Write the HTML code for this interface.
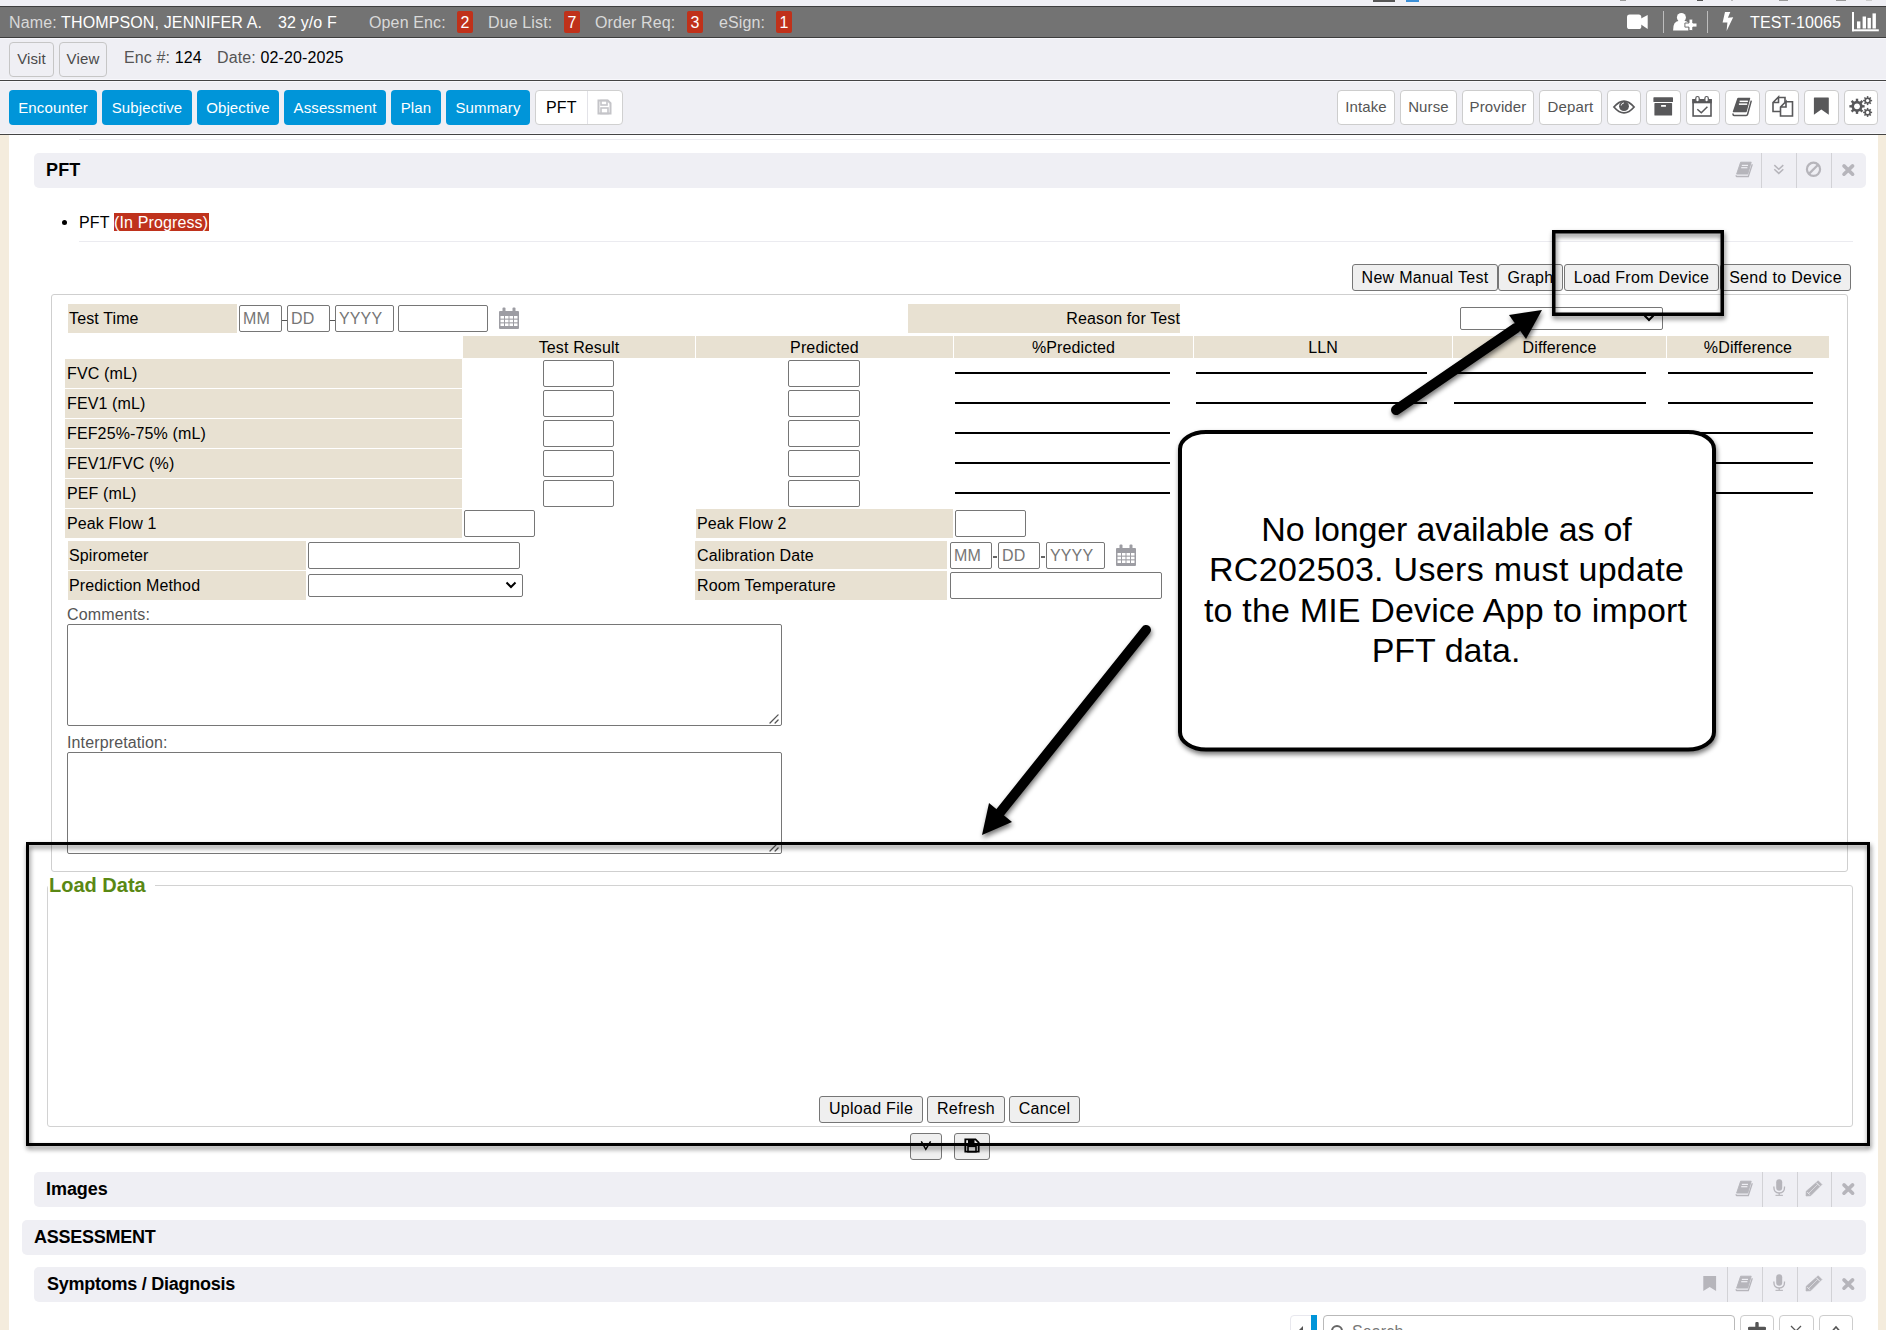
<!DOCTYPE html>
<html><head><meta charset="utf-8">
<style>
*{box-sizing:border-box}
html,body{margin:0;padding:0}
body{width:1886px;height:1330px;overflow:hidden;position:relative;background:#fff;font-family:"Liberation Sans",sans-serif;font-size:16px;color:#000;letter-spacing:0.13px}
.a{position:absolute}
.t{position:absolute;white-space:nowrap;line-height:18px}
.hdrbg{left:0;top:0;width:1886px;height:134px;background:#efeff4}
.topbar{left:0;top:6px;width:1886px;height:32px;background:#737373;border-top:1px solid #3d3d3d;border-bottom:1px solid #3d3d3d}
.hl{left:0;width:1886px;height:1px;background:#444}
.hlw{left:0;width:1886px;height:1px;background:#f8f8fc}
.lbl{color:#d9d9d9}
.wt{color:#fff}
.badge{position:absolute;top:11px;height:22px;width:16px;background:#c0311a;border-radius:2px;color:#fff;text-align:center;line-height:23px;font-size:16px}
.btnw{position:absolute;top:42px;height:35px;border:1px solid #c6c6c6;border-radius:4px;background:#efeff4;color:#4a4a4a;text-align:center;line-height:31px;font-size:15px}
.tab{position:absolute;top:90px;height:35px;background:#0095d9;border-radius:4px;color:#fff;font-size:15px;text-align:center;line-height:35px}
.rbtn{position:absolute;top:90px;height:35px;background:#fff;border:1px solid #cdcdcd;border-radius:4px;color:#555;font-size:15px;text-align:center;line-height:31px}
.ico{position:absolute;top:90px;height:35px;width:34px;background:#fff;border:1px solid #cdcdcd;border-radius:4px}
.ico svg{position:absolute;left:50%;top:50%;transform:translate(-50%,-50%)}
.beige{background:#f4ecdd}
.sechdr{position:absolute;background:#efeff4;border-radius:5px}
.bh{letter-spacing:-0.25px}
.sep{position:absolute;width:1px;background:#d2d2d6}
.cell{position:absolute;background:#e8e1d2;line-height:29px;padding-left:2px;white-space:nowrap}
.inp{position:absolute;background:#fff;border:1px solid #767676;border-radius:2px}
.ph{color:#767676;font-size:16px;line-height:26px;padding-left:3px}
.ul{position:absolute;height:2px;background:#000}
.gbtn{position:absolute;background:#efefef;border:1px solid #767676;border-radius:3px;text-align:center;line-height:25px;white-space:nowrap;letter-spacing:0.3px}
.gb2{line-height:23px}
</style></head>
<body>
<div class="a hdrbg"></div>
<!-- top artifacts -->
<div class="a" style="left:1373px;top:0;width:22px;height:2px;background:#555"></div>
<div class="a" style="left:1406px;top:0;width:13px;height:2px;background:#3a8fd8"></div>
<div class="a" style="left:1620px;top:0;width:6px;height:1px;background:#9a9a9a"></div><div class="a" style="left:1697px;top:0;width:6px;height:1px;background:#555"></div><div class="a" style="left:1731px;top:0;width:2px;height:1px;background:#bbb"></div><div class="a" style="left:1779px;top:0;width:9px;height:1px;background:#999"></div><div class="a" style="left:1836px;top:0;width:10px;height:1px;background:#999"></div><div class="a" style="left:1866px;top:0;width:6px;height:1px;background:#ccc"></div>

<div class="a topbar"></div>
<div class="a hlw" style="top:38px"></div>
<div class="t lbl" style="left:9px;top:14px">Name: <span class="wt">THOMPSON, JENNIFER A.</span></div>
<div class="t wt" style="left:278px;top:14px">32 y/o F</div>
<div class="t lbl" style="left:369px;top:14px">Open Enc:</div>
<div class="badge" style="left:457px">2</div>
<div class="t lbl" style="left:488px;top:14px">Due List:</div>
<div class="badge" style="left:564px">7</div>
<div class="t lbl" style="left:595px;top:14px">Order Req:</div>
<div class="badge" style="left:687px">3</div>
<div class="t lbl" style="left:719px;top:14px">eSign:</div>
<div class="badge" style="left:776px">1</div>

<div class="t wt" style="left:1750px;top:14px">TEST-10065</div>
<!-- top bar icons -->
<svg class="a" style="left:1626px;top:14px" width="24" height="16" viewBox="0 0 24 16">
  <rect x="1" y="0.4" width="14.3" height="14.6" rx="2.6" fill="#fff"/>
  <path d="M15 4.6 L21.7 1 V15 L15 10.6 Z" fill="#fff"/>
</svg>
<div class="a" style="left:1663px;top:11px;width:1px;height:22px;background:#bdbdbd"></div>
<svg class="a" style="left:1672px;top:13px" width="27" height="19" viewBox="0 0 27 19">
  <circle cx="9.4" cy="4.5" r="4.5" fill="#fff"/>
  <path d="M1.1 17.6 Q0.8 8 7.5 7.8 H11.5 Q14.5 7.8 16.5 9.8 V17.6 Z" fill="#fff"/>
  <path d="M17 6.1 H20.8 V10 H25 V14.1 H20.8 V17.6 H17 V14.1 H12.9 V10 H17 Z" fill="#fff" stroke="#737373" stroke-width="1"/>
</svg>
<div class="a" style="left:1707px;top:11px;width:1px;height:22px;background:#bdbdbd"></div>
<svg class="a" style="left:1721px;top:11px" width="14" height="21" viewBox="0 0 14 21">
  <path d="M4 0.9 L9.3 0.9 L6.9 6.8 L12.2 6.2 L5.6 19.9 L6.4 11.4 L1.6 11.5 Z" fill="#fff"/>
</svg>
<svg class="a" style="left:1852px;top:12px" width="28" height="21" viewBox="0 0 28 21">
  <rect x="0" y="0" width="2" height="19.3" fill="#fff"/>
  <rect x="0" y="17.3" width="26.8" height="2" fill="#fff"/>
  <rect x="5" y="9.4" width="3.4" height="7.1" fill="#fff"/>
  <rect x="10.6" y="4.5" width="3.4" height="12" fill="#fff"/>
  <rect x="15.5" y="5.9" width="3.4" height="10.6" fill="#fff"/>
  <rect x="20.5" y="1.4" width="3.4" height="15.1" fill="#fff"/>
</svg>


<!-- row 2 -->
<div class="btnw" style="left:9px;width:45px">Visit</div>
<div class="btnw" style="left:59px;width:48px">View</div>
<div class="t" style="left:124px;top:49px;color:#555">Enc #: <span style="color:#000">124</span></div>
<div class="t" style="left:217px;top:49px;color:#555">Date: <span style="color:#000">02-20-2025</span></div>

<div class="a hlw" style="top:79px"></div>
<div class="a hl" style="top:80px"></div>
<div class="a hlw" style="top:81px"></div>

<!-- tabs -->
<div class="tab" style="left:9px;width:88px">Encounter</div>
<div class="tab" style="left:102px;width:90px">Subjective</div>
<div class="tab" style="left:197px;width:82px">Objective</div>
<div class="tab" style="left:284px;width:102px">Assessment</div>
<div class="tab" style="left:391px;width:50px">Plan</div>
<div class="tab" style="left:446px;width:84px">Summary</div>
<div class="rbtn" style="left:535px;width:88px;border-color:#d0d0d0"></div>

<div class="rbtn" style="left:1337px;width:58px">Intake</div>
<div class="rbtn" style="left:1400px;width:57px">Nurse</div>
<div class="rbtn" style="left:1462px;width:72px">Provider</div>
<div class="rbtn" style="left:1539px;width:63px">Depart</div>


<!-- PFT tab -->
<div class="t" style="left:546px;top:99px;color:#000">PFT</div>
<div class="a" style="left:587px;top:91px;width:1px;height:33px;background:#e3e3e8"></div>
<svg class="a" style="left:597px;top:99px" width="15" height="16" viewBox="0 0 15 16">
  <path d="M1.5 1.5 H10.8 L13.5 4.2 V14.5 H1.5 Z" fill="none" stroke="#c4c4c8" stroke-width="2"/>
  <rect x="4" y="1.5" width="6" height="4.5" fill="none" stroke="#c4c4c8" stroke-width="1.6"/>
  <rect x="4" y="9" width="7" height="5.5" fill="none" stroke="#c4c4c8" stroke-width="1.6"/>
</svg>

<!-- right icon buttons -->
<div class="ico" style="left:1607px"><svg style="position:absolute;left:-1px;top:-1px;transform:none" width="34" height="35" viewBox="0 0 34 35"><path d="M6.9 17 Q17 5.2 27.1 17 Q17 28.8 6.9 17 Z" fill="none" stroke="#58585a" stroke-width="1.7"/><circle cx="17" cy="16.2" r="4.9" fill="#58585a"/><path d="M14.2 15.5 A3 3 0 0 1 17 12.9" fill="none" stroke="#fff" stroke-width="0.9"/></svg></div>
<div class="ico" style="left:1646px;width:35px"><svg style="position:absolute;left:-1px;top:-1px;transform:none" width="34" height="35" viewBox="0 0 34 35"><rect x="7.4" y="7.3" width="19.6" height="4.7" rx="0.6" fill="#58585a"/><rect x="8.4" y="13.1" width="17.7" height="12.5" rx="0.6" fill="#58585a"/><rect x="15" y="15" width="5" height="1.7" rx="0.5" fill="#fff"/></svg></div>
<div class="ico" style="left:1686px"><svg style="position:absolute;left:-1px;top:-1px;transform:none" width="34" height="35" viewBox="0 0 34 35"><rect x="7.1" y="9.9" width="17.9" height="16.1" fill="none" stroke="#58585a" stroke-width="1.6"/><rect x="6.3" y="9.1" width="19.5" height="4.2" fill="#58585a"/><rect x="9.8" y="6.5" width="3.4" height="5.4" rx="1.7" fill="#fff" stroke="#58585a" stroke-width="1.2"/><rect x="18.9" y="6.5" width="3.4" height="5.4" rx="1.7" fill="#fff" stroke="#58585a" stroke-width="1.2"/><path d="M11.3 19.2 L15.3 22.8 L21.4 16.7" fill="none" stroke="#58585a" stroke-width="1.5"/></svg></div>
<div class="ico" style="left:1725px;width:35px"><svg style="position:absolute;left:-1px;top:-1px;transform:none" width="34" height="35" viewBox="0 0 34 35"><path d="M13.3 7.7 H24.9 Q25.4 7.7 25.2 8.4 L21.8 21.6 Q21.6 22.2 21 22.2 H8.3 Q7.6 22.2 7.8 21.5 L12.2 8.4 Q12.5 7.7 13.3 7.7 Z" fill="#58585a"/><path d="M8.2 23.5 Q7.6 25.4 9.2 25.4 H21.2 Q22.3 25.4 22.6 24.3 L26.3 10.6" fill="none" stroke="#58585a" stroke-width="1.5"/><rect x="14.6" y="10.6" width="8.3" height="1.5" fill="#fff"/><rect x="13.9" y="13.4" width="8.3" height="1.5" fill="#fff"/></svg></div>
<div class="ico" style="left:1765px"><svg style="position:absolute;left:-1px;top:-1px;transform:none" width="34" height="35" viewBox="0 0 34 35"><g fill="none" stroke="#58585a" stroke-width="1.6" stroke-linejoin="miter"><path d="M13.5 7.5 H20 V12 M15.5 21.5 H8 V12.5 L13.5 7 V12.5 H8"/><path d="M20.5 11.8 H27.5 V26 H15.5 V17 L21 11.5 V17 H15.5"/></g></svg></div>
<div class="ico" style="left:1804px;width:35px"><svg style="position:absolute;left:-1px;top:-1px;transform:none" width="34" height="35" viewBox="0 0 34 35"><path d="M10.4 7.5 H24.3 Q24.8 7.5 24.8 8 V24.8 L17.3 19.4 L9.9 24.8 V8 Q9.9 7.5 10.4 7.5 Z" fill="#58585a"/></svg></div>
<div class="ico" style="left:1844px"><svg style="position:absolute;left:-1px;top:-1px;transform:none" width="34" height="35" viewBox="0 0 34 35"><circle cx="13" cy="16.3" r="5.6" fill="#58585a"/><rect x="11.8" y="8.700000000000001" width="2.4" height="7.6" fill="#58585a" transform="rotate(0.0 13 16.3)"/><rect x="11.8" y="8.700000000000001" width="2.4" height="7.6" fill="#58585a" transform="rotate(45.0 13 16.3)"/><rect x="11.8" y="8.700000000000001" width="2.4" height="7.6" fill="#58585a" transform="rotate(90.0 13 16.3)"/><rect x="11.8" y="8.700000000000001" width="2.4" height="7.6" fill="#58585a" transform="rotate(135.0 13 16.3)"/><rect x="11.8" y="8.700000000000001" width="2.4" height="7.6" fill="#58585a" transform="rotate(180.0 13 16.3)"/><rect x="11.8" y="8.700000000000001" width="2.4" height="7.6" fill="#58585a" transform="rotate(225.0 13 16.3)"/><rect x="11.8" y="8.700000000000001" width="2.4" height="7.6" fill="#58585a" transform="rotate(270.0 13 16.3)"/><rect x="11.8" y="8.700000000000001" width="2.4" height="7.6" fill="#58585a" transform="rotate(315.0 13 16.3)"/><circle cx="13" cy="16.3" r="2.9" fill="#fff"/><circle cx="23.6" cy="10.6" r="3.2" fill="#58585a"/><rect x="22.85" y="6.1" width="1.5" height="4.5" fill="#58585a" transform="rotate(0.0 23.6 10.6)"/><rect x="22.85" y="6.1" width="1.5" height="4.5" fill="#58585a" transform="rotate(45.0 23.6 10.6)"/><rect x="22.85" y="6.1" width="1.5" height="4.5" fill="#58585a" transform="rotate(90.0 23.6 10.6)"/><rect x="22.85" y="6.1" width="1.5" height="4.5" fill="#58585a" transform="rotate(135.0 23.6 10.6)"/><rect x="22.85" y="6.1" width="1.5" height="4.5" fill="#58585a" transform="rotate(180.0 23.6 10.6)"/><rect x="22.85" y="6.1" width="1.5" height="4.5" fill="#58585a" transform="rotate(225.0 23.6 10.6)"/><rect x="22.85" y="6.1" width="1.5" height="4.5" fill="#58585a" transform="rotate(270.0 23.6 10.6)"/><rect x="22.85" y="6.1" width="1.5" height="4.5" fill="#58585a" transform="rotate(315.0 23.6 10.6)"/><circle cx="23.6" cy="10.6" r="1.6" fill="#fff"/><circle cx="23.6" cy="22.4" r="3.2" fill="#58585a"/><rect x="22.85" y="17.9" width="1.5" height="4.5" fill="#58585a" transform="rotate(0.0 23.6 22.4)"/><rect x="22.85" y="17.9" width="1.5" height="4.5" fill="#58585a" transform="rotate(45.0 23.6 22.4)"/><rect x="22.85" y="17.9" width="1.5" height="4.5" fill="#58585a" transform="rotate(90.0 23.6 22.4)"/><rect x="22.85" y="17.9" width="1.5" height="4.5" fill="#58585a" transform="rotate(135.0 23.6 22.4)"/><rect x="22.85" y="17.9" width="1.5" height="4.5" fill="#58585a" transform="rotate(180.0 23.6 22.4)"/><rect x="22.85" y="17.9" width="1.5" height="4.5" fill="#58585a" transform="rotate(225.0 23.6 22.4)"/><rect x="22.85" y="17.9" width="1.5" height="4.5" fill="#58585a" transform="rotate(270.0 23.6 22.4)"/><rect x="22.85" y="17.9" width="1.5" height="4.5" fill="#58585a" transform="rotate(315.0 23.6 22.4)"/><circle cx="23.6" cy="22.4" r="1.6" fill="#fff"/></svg></div>
<div class="a hlw" style="top:133px"></div>
<div class="a hl" style="top:134px"></div>

<!-- beige side strips -->
<div class="a beige" style="left:0;top:135px;width:9px;height:1195px"></div>
<div class="a beige" style="left:1878px;top:135px;width:8px;height:1195px"></div>


<!-- faint lines -->
<div class="a" style="left:79px;top:139px;width:1774px;height:1px;background:#ebebf0"></div>

<!-- PFT section header -->
<div class="sechdr" style="left:34px;top:153px;width:1832px;height:35px"></div>
<div class="t" style="left:46px;top:160px;font-weight:bold;font-size:18px;line-height:20px">PFT</div>
<div class="sep" style="left:1761px;top:153px;height:35px"></div>
<div class="sep" style="left:1796px;top:153px;height:35px"></div>
<div class="sep" style="left:1831px;top:153px;height:35px"></div>
<svg class="a" style="left:1734px;top:161px" width="20" height="18" viewBox="0 0 20 18"><path d="M6.6 1.2 H17.2 L13.8 13.1 H2.6 Z" fill="#b6b5bb" stroke="#b6b5bb" stroke-width="0.9" stroke-linejoin="round"/><path d="M2.1 14.2 Q2 15.5 3.4 15.5 H14.3 L18.3 3.2" fill="none" stroke="#b6b5bb" stroke-width="1.3"/><rect x="7.8" y="3.8" width="6.2" height="1.2" fill="#efeff4"/><rect x="7.2" y="6.1" width="6.2" height="1.2" fill="#efeff4"/></svg>
<svg class="a" style="left:1773px;top:164px" width="12" height="11" viewBox="0 0 12 11"><path d="M1.3 1.1 L5.8 5.3 L10.3 1.1 M1.3 5.2 L5.8 9.4 L10.3 5.2" fill="none" stroke="#b6b5bb" stroke-width="1.5"/></svg>
<svg class="a" style="left:1805px;top:161px" width="17" height="17" viewBox="0 0 17 17"><circle cx="8.5" cy="8.3" r="6.6" fill="none" stroke="#b6b5bb" stroke-width="2.2"/><path d="M3.9 12.9 L13.1 3.7" stroke="#b6b5bb" stroke-width="2.2"/></svg>
<svg class="a" style="left:1841px;top:163px" width="15" height="15" viewBox="0 0 15 15"><path d="M3 2.9 L11.6 11.2 M11.6 2.9 L3 11.2" stroke="#b6b5bb" stroke-width="3.6" stroke-linecap="round"/></svg>

<!-- bullet item -->
<div class="a" style="left:62px;top:220px;width:5px;height:5px;border-radius:50%;background:#000"></div>
<div class="t" style="left:79px;top:214px">PFT</div>
<div class="a" style="left:114px;top:213px;width:95px;height:18px;background:#bf321c"></div>
<div class="t" style="left:114px;top:214px;color:#fff">(In Progress)</div>
<div class="a" style="left:79px;top:241px;width:1774px;height:1px;background:#ebebf0"></div>

<!-- action buttons -->
<div class="gbtn" style="left:1352px;top:264px;width:146px;height:27px">New Manual Test</div>
<div class="gbtn" style="left:1498px;top:264px;width:65px;height:27px">Graph</div>
<div class="gbtn" style="left:1564px;top:264px;width:155px;height:27px">Load From Device</div>
<div class="gbtn" style="left:1720px;top:264px;width:131px;height:27px">Send to Device</div>

<!-- form box -->
<div class="a" style="left:51px;top:294px;width:1797px;height:578px;border:1px solid #cfcfcf;border-radius:3px"></div>

<div class="cell" style="left:68px;top:304px;width:169px;height:29px;padding-left:1px">Test Time</div>
<div class="inp ph" style="left:239px;top:305px;width:43px;height:27px">MM</div>
<div class="a" style="left:282px;top:320px;width:5px;height:1px;background:#555"></div>
<div class="inp ph" style="left:287px;top:305px;width:43px;height:27px">DD</div>
<div class="a" style="left:330px;top:320px;width:5px;height:1px;background:#555"></div>
<div class="inp ph" style="left:335px;top:305px;width:59px;height:27px">YYYY</div>
<div class="inp" style="left:398px;top:305px;width:90px;height:27px"></div>
<svg class="a" style="left:498px;top:307px" width="22" height="23" viewBox="0 0 22 23"><g fill="#9d9da3"><rect x="1" y="4" width="20" height="18" rx="1"/><rect x="4.5" y="0.5" width="3" height="6" rx="1"/><rect x="14.5" y="0.5" width="3" height="6" rx="1"/></g><g fill="#fff"><rect x="2.5" y="9" width="3.5" height="2.6"/><rect x="7" y="9" width="3.5" height="2.6"/><rect x="11.5" y="9" width="3.5" height="2.6"/><rect x="16" y="9" width="3.5" height="2.6"/><rect x="2.5" y="12.7" width="3.5" height="2.6"/><rect x="7" y="12.7" width="3.5" height="2.6"/><rect x="11.5" y="12.7" width="3.5" height="2.6"/><rect x="16" y="12.7" width="3.5" height="2.6"/><rect x="2.5" y="16.4" width="3.5" height="2.6"/><rect x="7" y="16.4" width="3.5" height="2.6"/><rect x="11.5" y="16.4" width="3.5" height="2.6"/><rect x="16" y="16.4" width="3.5" height="2.6"/></g></svg>
<div class="cell" style="left:908px;top:304px;width:272px;height:29px;text-align:right;padding-right:0">Reason for Test</div>
<div class="inp" style="left:1460px;top:307px;width:203px;height:23px"></div>
<svg class="a" style="left:1643px;top:314px" width="12" height="8" viewBox="0 0 12 8"><path d="M1.5 1.5 L6 6 L10.5 1.5" fill="none" stroke="#000" stroke-width="2"/></svg>

<!-- header row -->
<div class="cell" style="left:463px;top:336px;width:232px;height:22px;line-height:24px;text-align:center;padding:0">Test Result</div>
<div class="cell" style="left:696px;top:336px;width:257px;height:22px;line-height:24px;text-align:center;padding:0">Predicted</div>
<div class="cell" style="left:954px;top:336px;width:239px;height:22px;line-height:24px;text-align:center;padding:0">%Predicted</div>
<div class="cell" style="left:1194px;top:336px;width:258px;height:22px;line-height:24px;text-align:center;padding:0">LLN</div>
<div class="cell" style="left:1453px;top:336px;width:213px;height:22px;line-height:24px;text-align:center;padding:0">Difference</div>
<div class="cell" style="left:1667px;top:336px;width:162px;height:22px;line-height:24px;text-align:center;padding:0">%Difference</div>
<div class="cell" style="left:65px;top:359px;width:397px;height:29px">FVC (mL)</div>
<div class="inp" style="left:543px;top:360px;width:71px;height:27px"></div>
<div class="inp" style="left:788px;top:360px;width:72px;height:27px"></div>
<div class="ul" style="left:955px;top:372px;width:215px"></div>
<div class="ul" style="left:1196px;top:372px;width:231px"></div>
<div class="ul" style="left:1454px;top:372px;width:192px"></div>
<div class="ul" style="left:1668px;top:372px;width:145px"></div>
<div class="cell" style="left:65px;top:389px;width:397px;height:29px">FEV1 (mL)</div>
<div class="inp" style="left:543px;top:390px;width:71px;height:27px"></div>
<div class="inp" style="left:788px;top:390px;width:72px;height:27px"></div>
<div class="ul" style="left:955px;top:402px;width:215px"></div>
<div class="ul" style="left:1196px;top:402px;width:231px"></div>
<div class="ul" style="left:1454px;top:402px;width:192px"></div>
<div class="ul" style="left:1668px;top:402px;width:145px"></div>
<div class="cell" style="left:65px;top:419px;width:397px;height:29px">FEF25%-75% (mL)</div>
<div class="inp" style="left:543px;top:420px;width:71px;height:27px"></div>
<div class="inp" style="left:788px;top:420px;width:72px;height:27px"></div>
<div class="ul" style="left:955px;top:432px;width:215px"></div>
<div class="ul" style="left:1196px;top:432px;width:231px"></div>
<div class="ul" style="left:1454px;top:432px;width:192px"></div>
<div class="ul" style="left:1668px;top:432px;width:145px"></div>
<div class="cell" style="left:65px;top:449px;width:397px;height:29px">FEV1/FVC (%)</div>
<div class="inp" style="left:543px;top:450px;width:71px;height:27px"></div>
<div class="inp" style="left:788px;top:450px;width:72px;height:27px"></div>
<div class="ul" style="left:955px;top:462px;width:215px"></div>
<div class="ul" style="left:1196px;top:462px;width:231px"></div>
<div class="ul" style="left:1454px;top:462px;width:192px"></div>
<div class="ul" style="left:1668px;top:462px;width:145px"></div>
<div class="cell" style="left:65px;top:479px;width:397px;height:29px">PEF (mL)</div>
<div class="inp" style="left:543px;top:480px;width:71px;height:27px"></div>
<div class="inp" style="left:788px;top:480px;width:72px;height:27px"></div>
<div class="ul" style="left:955px;top:492px;width:215px"></div>
<div class="ul" style="left:1196px;top:492px;width:231px"></div>
<div class="ul" style="left:1454px;top:492px;width:192px"></div>
<div class="ul" style="left:1668px;top:492px;width:145px"></div>

<div class="cell" style="left:65px;top:509px;width:397px;height:29px">Peak Flow 1</div>
<div class="inp" style="left:464px;top:510px;width:71px;height:27px"></div>
<div class="cell" style="left:696px;top:509px;width:257px;height:29px;padding-left:1px">Peak Flow 2</div>
<div class="inp" style="left:955px;top:510px;width:71px;height:27px"></div>

<div class="cell" style="left:68px;top:541px;width:238px;height:29px;padding-left:1px">Spirometer</div>
<div class="inp" style="left:308px;top:542px;width:212px;height:27px"></div>
<div class="cell" style="left:68px;top:571px;width:238px;height:29px;padding-left:1px">Prediction Method</div>
<div class="inp" style="left:308px;top:574px;width:215px;height:23px"></div>
<svg class="a" style="left:505px;top:581px" width="12" height="8" viewBox="0 0 12 8"><path d="M1.5 1.5 L6 6 L10.5 1.5" fill="none" stroke="#000" stroke-width="2"/></svg>

<div class="cell" style="left:695px;top:541px;width:252px;height:28px;padding-left:2px">Calibration Date</div>
<div class="inp ph" style="left:950px;top:542px;width:42px;height:27px">MM</div>
<div class="a" style="left:993px;top:556px;width:4px;height:2px;background:#666"></div>
<div class="inp ph" style="left:998px;top:542px;width:42px;height:27px">DD</div>
<div class="a" style="left:1041px;top:556px;width:4px;height:2px;background:#666"></div>
<div class="inp ph" style="left:1046px;top:542px;width:59px;height:27px">YYYY</div>
<svg class="a" style="left:1115px;top:544px" width="22" height="23" viewBox="0 0 22 23"><g fill="#9d9da3"><rect x="1" y="4" width="20" height="18" rx="1"/><rect x="4.5" y="0.5" width="3" height="6" rx="1"/><rect x="14.5" y="0.5" width="3" height="6" rx="1"/></g><g fill="#fff"><rect x="2.5" y="9" width="3.5" height="2.6"/><rect x="7" y="9" width="3.5" height="2.6"/><rect x="11.5" y="9" width="3.5" height="2.6"/><rect x="16" y="9" width="3.5" height="2.6"/><rect x="2.5" y="12.7" width="3.5" height="2.6"/><rect x="7" y="12.7" width="3.5" height="2.6"/><rect x="11.5" y="12.7" width="3.5" height="2.6"/><rect x="16" y="12.7" width="3.5" height="2.6"/><rect x="2.5" y="16.4" width="3.5" height="2.6"/><rect x="7" y="16.4" width="3.5" height="2.6"/><rect x="11.5" y="16.4" width="3.5" height="2.6"/><rect x="16" y="16.4" width="3.5" height="2.6"/></g></svg>
<div class="cell" style="left:695px;top:571px;width:252px;height:29px;padding-left:2px">Room Temperature</div>
<div class="inp" style="left:950px;top:572px;width:212px;height:27px"></div>

<div class="t" style="left:67px;top:606px;color:#555">Comments:</div>
<div class="inp" style="left:67px;top:624px;width:715px;height:102px"></div>
<svg class="a" style="left:768px;top:713px" width="12" height="12" viewBox="0 0 12 12"><path d="M10.1 1.9 L2 10 M10.1 7 L7.1 10" stroke="#555" stroke-width="1.3" stroke-linecap="round"/></svg>
<div class="t" style="left:67px;top:734px;color:#555">Interpretation:</div>
<div class="inp" style="left:67px;top:752px;width:715px;height:102px"></div>
<svg class="a" style="left:768px;top:841px" width="12" height="12" viewBox="0 0 12 12"><path d="M10.1 1.9 L2 10 M10.1 7 L7.1 10" stroke="#555" stroke-width="1.3" stroke-linecap="round"/></svg>


<!-- Load Data fieldset -->
<div class="a" style="left:47px;top:885px;width:1806px;height:242px;border:1px solid #d2d2d2;border-radius:3px"></div>
<div class="a" style="left:48px;top:882px;width:107px;height:8px;background:#fff"></div>
<div class="t" style="left:49px;top:874px;font-weight:bold;font-size:20px;line-height:22px;color:#5a8814;letter-spacing:0">Load Data</div>
<div class="gbtn" style="left:819px;top:1096px;width:104px;height:27px;line-height:23px">Upload File</div>
<div class="gbtn" style="left:927px;top:1096px;width:78px;height:27px;line-height:23px">Refresh</div>
<div class="gbtn" style="left:1009px;top:1096px;width:71px;height:27px;line-height:23px">Cancel</div>

<div class="gbtn" style="left:910px;top:1133px;width:32px;height:27px"></div>
<svg class="a" style="left:920px;top:1140px" width="12" height="11" viewBox="0 0 12 11"><path d="M1.3 1.3 L5.8 9.4 L10.6 1.3" fill="none" stroke="#000" stroke-width="1.4"/></svg>
<div class="gbtn" style="left:954px;top:1133px;width:36px;height:27px"></div>
<svg class="a" style="left:964px;top:1138px" width="16" height="15" viewBox="0 0 16 15"><path d="M1.3 1.3 H11.5 L14.7 4.5 V13.7 H1.3 Z" fill="none" stroke="#000" stroke-width="1.8"/><rect x="4" y="1.3" width="6.5" height="4" fill="#000"/><rect x="4" y="8.3" width="8" height="5.4" fill="none" stroke="#000" stroke-width="1.6"/></svg>

<!-- Images -->
<div class="sechdr" style="left:34px;top:1172px;width:1832px;height:35px"></div>
<div class="t" style="left:46px;top:1179px;font-weight:bold;font-size:18px;line-height:20px;letter-spacing:-0.05px">Images</div>
<div class="sep" style="left:1762px;top:1172px;height:35px"></div>
<div class="sep" style="left:1797px;top:1172px;height:35px"></div>
<div class="sep" style="left:1831px;top:1172px;height:35px"></div>
<svg class="a" style="left:1734px;top:1180px" width="20" height="18" viewBox="0 0 20 18"><path d="M6.6 1.2 H17.2 L13.8 13.1 H2.6 Z" fill="#b6b5bb" stroke="#b6b5bb" stroke-width="0.9" stroke-linejoin="round"/><path d="M2.1 14.2 Q2 15.5 3.4 15.5 H14.3 L18.3 3.2" fill="none" stroke="#b6b5bb" stroke-width="1.3"/><rect x="7.8" y="3.8" width="6.2" height="1.2" fill="#efeff4"/><rect x="7.2" y="6.1" width="6.2" height="1.2" fill="#efeff4"/></svg>
<svg class="a" style="left:1773px;top:1179px" width="13" height="18" viewBox="0 0 13 18"><rect x="3.2" y="0.3" width="6" height="11.5" rx="3" fill="#b6b5bb"/><path d="M0.9 7.5 V8.6 Q0.9 14 6.2 14 Q11.5 14 11.5 8.6 V7.5" fill="none" stroke="#b6b5bb" stroke-width="1.3"/><rect x="5.6" y="14" width="1.2" height="2" fill="#b6b5bb"/><rect x="2.5" y="15.8" width="7.4" height="1.1" fill="#b6b5bb"/></svg>
<svg class="a" style="left:1805px;top:1180px" width="18" height="17" viewBox="0 0 18 17"><path d="M13.2 0.8 L16.9 4.5 L5.6 15.8 L1 16 L1.2 11.3 Z" fill="#b6b5bb" stroke="#b6b5bb" stroke-width="0.6" stroke-linejoin="round"/><path d="M11.3 2.7 L15 6.4" stroke="#efeff4" stroke-width="1"/><path d="M2.4 12.2 L4.8 14.6" stroke="#efeff4" stroke-width="1"/><path d="M3.8 13.2 L12.6 4.4" stroke="#efeff4" stroke-width="0.6"/></svg>
<svg class="a" style="left:1841px;top:1182px" width="15" height="15" viewBox="0 0 15 15"><path d="M3 2.9 L11.6 11.2 M11.6 2.9 L3 11.2" stroke="#b6b5bb" stroke-width="3.6" stroke-linecap="round"/></svg>

<div class="sechdr" style="left:22px;top:1220px;width:1844px;height:35px"></div>
<div class="t" style="left:34px;top:1227px;font-weight:bold;font-size:18px;line-height:20px;letter-spacing:-0.25px">ASSESSMENT</div>
<div class="sechdr" style="left:34px;top:1267px;width:1832px;height:35px"></div>
<div class="t" style="left:47px;top:1274px;font-weight:bold;font-size:18px;line-height:20px;letter-spacing:-0.25px">Symptoms / Diagnosis</div>
<div class="sep" style="left:1762px;top:1267px;height:35px"></div>
<div class="sep" style="left:1797px;top:1267px;height:35px"></div>
<div class="sep" style="left:1831px;top:1267px;height:35px"></div>
<div class="sep" style="left:1727px;top:1267px;height:35px"></div>
<svg class="a" style="left:1734px;top:1275px" width="20" height="18" viewBox="0 0 20 18"><path d="M6.6 1.2 H17.2 L13.8 13.1 H2.6 Z" fill="#b6b5bb" stroke="#b6b5bb" stroke-width="0.9" stroke-linejoin="round"/><path d="M2.1 14.2 Q2 15.5 3.4 15.5 H14.3 L18.3 3.2" fill="none" stroke="#b6b5bb" stroke-width="1.3"/><rect x="7.8" y="3.8" width="6.2" height="1.2" fill="#efeff4"/><rect x="7.2" y="6.1" width="6.2" height="1.2" fill="#efeff4"/></svg>
<svg class="a" style="left:1773px;top:1274px" width="13" height="18" viewBox="0 0 13 18"><rect x="3.2" y="0.3" width="6" height="11.5" rx="3" fill="#b6b5bb"/><path d="M0.9 7.5 V8.6 Q0.9 14 6.2 14 Q11.5 14 11.5 8.6 V7.5" fill="none" stroke="#b6b5bb" stroke-width="1.3"/><rect x="5.6" y="14" width="1.2" height="2" fill="#b6b5bb"/><rect x="2.5" y="15.8" width="7.4" height="1.1" fill="#b6b5bb"/></svg>
<svg class="a" style="left:1805px;top:1275px" width="18" height="17" viewBox="0 0 18 17"><path d="M13.2 0.8 L16.9 4.5 L5.6 15.8 L1 16 L1.2 11.3 Z" fill="#b6b5bb" stroke="#b6b5bb" stroke-width="0.6" stroke-linejoin="round"/><path d="M11.3 2.7 L15 6.4" stroke="#efeff4" stroke-width="1"/><path d="M2.4 12.2 L4.8 14.6" stroke="#efeff4" stroke-width="1"/><path d="M3.8 13.2 L12.6 4.4" stroke="#efeff4" stroke-width="0.6"/></svg>
<svg class="a" style="left:1841px;top:1277px" width="15" height="15" viewBox="0 0 15 15"><path d="M3 2.9 L11.6 11.2 M11.6 2.9 L3 11.2" stroke="#b6b5bb" stroke-width="3.6" stroke-linecap="round"/></svg>
<svg class="a" style="left:1703px;top:1276px" width="14" height="16" viewBox="0 0 14 16"><path d="M0.3 0 H13.1 V15 L6.7 10.9 L0.3 15 Z" fill="#b6b5bb"/></svg>


<!-- search row -->
<div class="a" style="left:1290px;top:1315px;width:27px;height:30px;border:1px solid #e8e8ee;border-radius:4px;background:#fff"></div>
<div class="a" style="left:1311px;top:1315px;width:6px;height:20px;background:#0095d9"></div>
<svg class="a" style="left:1297px;top:1326px" width="8" height="10" viewBox="0 0 8 10"><path d="M6 0 L1 5 L6 10 Z" fill="#555"/></svg>
<div class="a" style="left:1323px;top:1315px;width:412px;height:30px;border:1px solid #b9b9b9;border-radius:4px;background:#fff"></div>
<svg class="a" style="left:1330px;top:1324px" width="14" height="10" viewBox="0 0 14 10"><circle cx="7" cy="7" r="5" fill="none" stroke="#666" stroke-width="2"/></svg>
<div class="t" style="left:1352px;top:1323px;color:#777">Search</div>
<div class="a" style="left:1740px;top:1315px;width:34px;height:30px;border:1px solid #cdcdcd;border-radius:4px;background:#fff"></div>
<svg class="a" style="left:1748px;top:1322px" width="18" height="12" viewBox="0 0 18 12"><path d="M9 1.5 V12 M1.5 6.5 H16.5" stroke="#555" stroke-width="3.4" stroke-linecap="round"/></svg>
<div class="a" style="left:1779px;top:1315px;width:35px;height:30px;border:1px solid #cdcdcd;border-radius:4px;background:#fff"></div>
<svg class="a" style="left:1789px;top:1325px" width="14" height="6" viewBox="0 0 14 6"><path d="M2 1 L12 11 M12 1 L2 11" stroke="#555" stroke-width="1.3"/></svg>
<div class="a" style="left:1819px;top:1315px;width:34px;height:30px;border:1px solid #cdcdcd;border-radius:4px;background:#fff"></div>
<svg class="a" style="left:1830px;top:1325px" width="12" height="6" viewBox="0 0 12 6"><path d="M1.5 7 L6 2 L10.5 7" fill="none" stroke="#555" stroke-width="1.6"/></svg>

<!-- annotations -->
<svg class="a" style="left:0;top:0" width="1886" height="1330" viewBox="0 0 1886 1330">
 <defs>
  <filter id="sh" x="-5%" y="-5%" width="110%" height="110%">
   <feGaussianBlur in="SourceAlpha" stdDeviation="2.5"/>
   <feOffset dx="1" dy="3" result="o"/>
   <feComponentTransfer><feFuncA type="linear" slope="0.55"/></feComponentTransfer>
   <feMerge><feMergeNode/><feMergeNode in="SourceGraphic"/></feMerge>
  </filter>
 </defs>
 <g filter="url(#sh)">
  <rect x="27.5" y="843.5" width="1841" height="301" fill="none" stroke="#000" stroke-width="3"/>
  <rect x="1553.75" y="231.75" width="168.5" height="82.5" fill="none" stroke="#000" stroke-width="3.5"/>
  <path d="M1206 432 H1688 A26 17 0 0 1 1714 449 V732 A26 17.6 0 0 1 1688 749.6 H1206 A26 17.6 0 0 1 1180 732 V449 A26 17 0 0 1 1206 432 Z" fill="#fff" stroke="#000" stroke-width="4"/>
  <line x1="1396" y1="410" x2="1516" y2="328" stroke="#000" stroke-width="10" stroke-linecap="round"/>
  <path d="M1542 310 L1509 315 L1526 339 Z" fill="#000"/>
  <line x1="1146" y1="630" x2="998" y2="815" stroke="#000" stroke-width="10" stroke-linecap="round"/>
  <path d="M982 835 L989 803 L1012 822 Z" fill="#000"/>
 </g>
 <g font-family="Liberation Sans" font-size="34" text-anchor="middle" fill="#000" style="letter-spacing:0">
  <text x="1446.5" y="541" textLength="370.5" lengthAdjust="spacing">No longer available as of</text>
  <text x="1446.5" y="581" textLength="475" lengthAdjust="spacing">RC202503. Users must update</text>
  <text x="1445.5" y="622" textLength="483" lengthAdjust="spacing">to the MIE Device App to import</text>
  <text x="1446" y="662">PFT data.</text>
 </g>
</svg>

<!-- MARKER_CONTENT -->
</body></html>
